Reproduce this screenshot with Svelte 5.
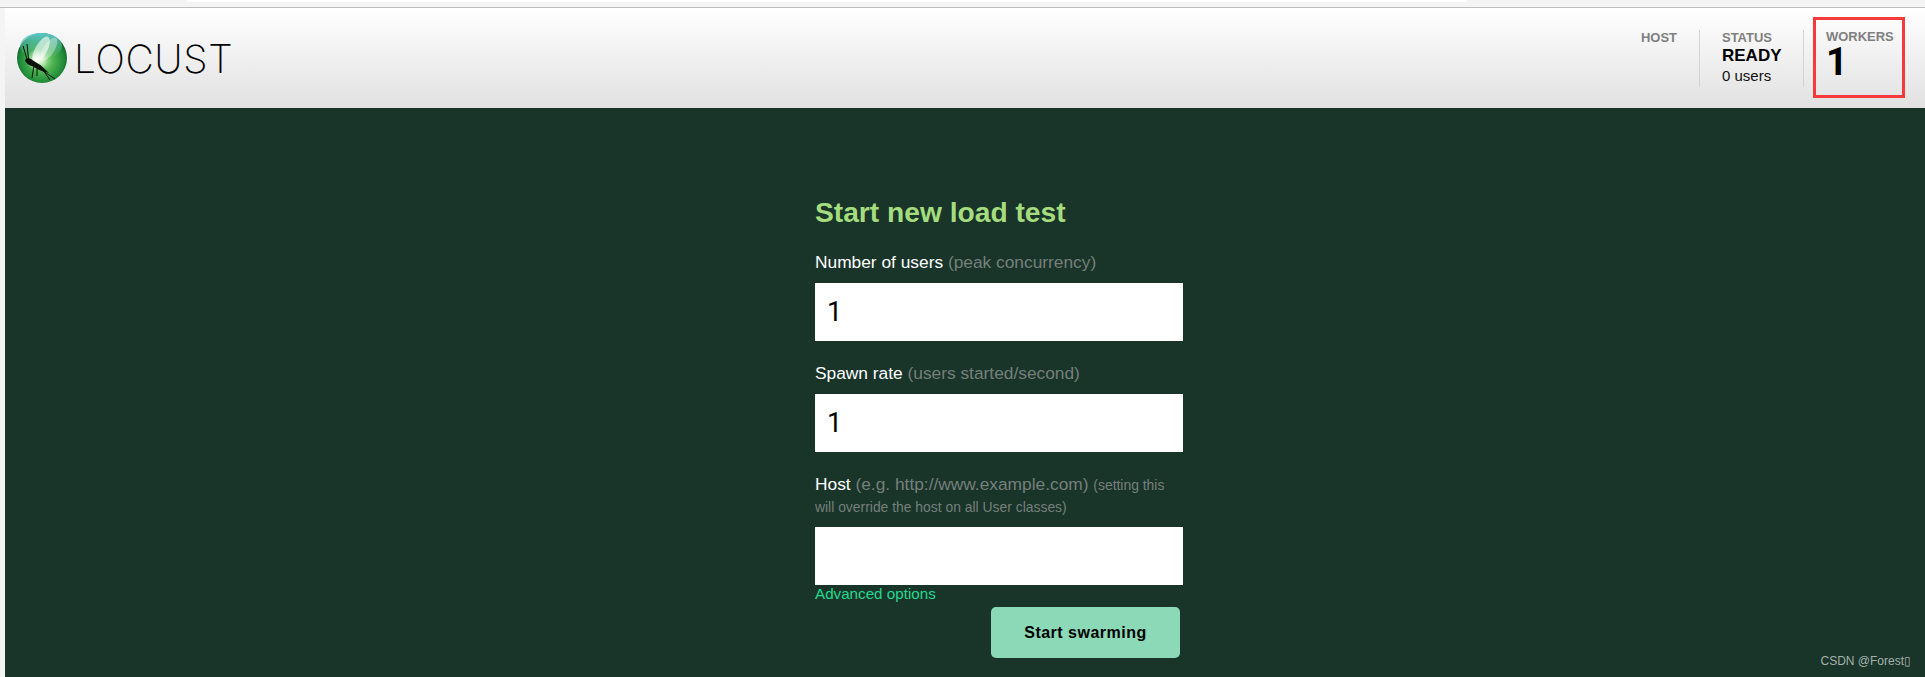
<script>
  let users = $state(1);
  let spawnRate = $state(1);
  let host = $state('');
</script>

<div class="page">
  <div class="topstrip"><div class="tab"></div></div>

  <header>
    <div class="brand">
      <svg class="logo" width="50" height="50" viewBox="0 0 50 50">
        <defs>
          <radialGradient id="ball" cx="0.5" cy="0.55" r="0.55">
            <stop offset="0" stop-color="#b8ecaa" />
            <stop offset="0.4" stop-color="#4fb552" />
            <stop offset="0.8" stop-color="#1f8a38" />
            <stop offset="1" stop-color="#0c5a28" />
          </radialGradient>
          <linearGradient id="cap" x1="0" y1="0" x2="0" y2="1">
            <stop offset="0" stop-color="#5cc8cc" stop-opacity="1" />
            <stop offset="1" stop-color="#6fd0a0" stop-opacity="0" />
          </linearGradient>
          <radialGradient id="glow" cx="0.5" cy="0.5" r="0.5">
            <stop offset="0" stop-color="#fff" stop-opacity="0.95" />
            <stop offset="1" stop-color="#fff" stop-opacity="0" />
          </radialGradient>
        </defs>
        <circle cx="25" cy="25" r="25" fill="url(#ball)" />
        <ellipse cx="24" cy="13" rx="21" ry="13" fill="url(#cap)" />
        <circle cx="20" cy="27" r="11" fill="url(#glow)" />
        <ellipse cx="24" cy="17" rx="6" ry="15" transform="rotate(28 24 17)" fill="#fff" opacity="0.6" />
        <ellipse cx="32" cy="16" rx="5.5" ry="13" transform="rotate(32 32 16)" fill="#fff" opacity="0.35" />
        <path d="M8 27 C10 24.5 13 25 16 27.5 L24 32.5 L32 40 L22 37 L16 33.5 C13 32.5 9 31 8 27 Z" fill="#0a120a" />
        <path d="M10 26 L6 13 M11.5 26 L10 11 M17 32 L15 45 M20 34 L20 43 M23 36 L38 46 M26 37 L33 47" stroke="#0a120a" stroke-width="1" fill="none" />
      </svg>
      <span class="wordmark">LOCUST</span>
    </div>

    <div class="stats">
      <div class="stat host">
        <div class="stat-label">HOST</div>
      </div>
      <div class="stat status">
        <div class="stat-label">STATUS</div>
        <div class="stat-value">READY</div>
        <div class="stat-sub">0 users</div>
      </div>
      <div class="workers">
        <div class="stat-label">WORKERS</div>
        <div class="workers-value">1</div>
      </div>
    </div>
  </header>

  <main>
    <form onsubmit={(e) => e.preventDefault()}>
      <h2>Start new load test</h2>

      <label for="users">Number of users <small>(peak concurrency)</small></label>
      <input id="users" type="text" bind:value={users} />

      <label for="rate" class="rate-label">Spawn rate <small>(users started/second)</small></label>
      <input id="rate" type="text" bind:value={spawnRate} />

      <label for="host" class="host-label">Host <small>(e.g. http://www.example.com)</small> <small class="note">(setting this will override the host on all User classes)</small></label>
      <input id="host" type="text" bind:value={host} />

      <a class="advanced" href="#advanced">Advanced options</a>
      <div class="actions">
        <button type="submit">Start swarming</button>
      </div>
    </form>
    <div class="watermark">CSDN @Forest▯</div>
  </main>
</div>

<style>
  :global(body) {
    margin: 0;
    background: #f4f4f4;
    font-family: "Liberation Sans", Arial, sans-serif;
  }

  .page {
    height: 677px;
    display: flex;
    flex-direction: column;
    overflow: hidden;
  }

  .topstrip {
    height: 7px;
    flex: none;
    border-bottom: 1px solid #bdbdbd;
    background: #f4f4f4;
  }

  .tab {
    width: 1280px;
    height: 2px;
    margin-left: 187px;
    background: #fff;
    border-radius: 0 0 8px 8px;
  }

  header {
    height: 100px;
    flex: none;
    margin-left: 5px;
    display: flex;
    justify-content: space-between;
    background: linear-gradient(#fff, #e1e1e1);
  }

  .brand {
    display: flex;
    align-items: center;
    padding-left: 12px;
    height: 100px;
  }

  .logo {
    flex: none;
  }

  .wordmark {
    margin-left: 7px;
    font-family: Inter, sans-serif;
    font-weight: 200;
    font-size: 39px;
    letter-spacing: 0.6px;
    color: #000;
    line-height: 1;
  }

  .stats {
    display: flex;
    align-items: flex-start;
    padding: 9px 20px 0 0;
  }

  .stat {
    height: 57px;
    margin-top: 13px;
    border-right: 1px solid #d4d4d4;
  }

  .host {
    padding-right: 20px;
  }

  .status {
    width: 81px;
    padding-left: 22px;
    margin-right: 9px;
  }

  .stat-label {
    font-size: 13.5px;
    font-weight: 700;
    line-height: 15px;
    color: #808080;
    transform: scaleX(0.96);
    transform-origin: left;
  }

  .stat-value {
    font-size: 17px;
    font-weight: 700;
    line-height: 21px;
    color: #000;
  }

  .stat-sub {
    font-size: 15px;
    line-height: 19px;
    color: #111;
  }

  .workers {
    width: 76px;
    height: 66px;
    border: 3px solid #f43a3a;
    padding: 9px 0 0 10px;
  }

  .workers-value {
    font-family: Roboto, sans-serif;
    font-size: 38px;
    font-weight: 700;
    line-height: 36px;
    color: #000;
  }

  main {
    position: relative;
    flex: 1;
    margin-left: 5px;
    background: #19352a;
    padding: 0 0 0 810px;
  }

  form {
    width: 368px;
    padding-top: 87px;
  }

  h2 {
    margin: 0 0 23px;
    font-size: 28.2px;
    line-height: 34px;
    font-weight: 700;
    color: #a5dc7e;
  }

  label {
    display: block;
    font-size: 17.33px;
    line-height: 20px;
    margin-bottom: 11px;
    color: #fff;
  }

  small {
    font-size: 17.33px;
    color: #767f7a;
  }

  .note {
    font-size: 13.9px;
  }

  .rate-label {
    margin-top: 22px;
    margin-bottom: 11px;
  }

  .host-label {
    line-height: 21px;
    margin-top: 22px;
    margin-bottom: 9px;
  }

  input {
    display: block;
    width: 100%;
    height: 58px;
    box-sizing: border-box;
    margin: 0;
    padding: 0 12px;
    border: none;
    border-radius: 0;
    background: #fff;
    font-family: Roboto, sans-serif;
    font-size: 27px;
    color: #000;
    outline: none;
  }

  .advanced {
    display: block;
    font-size: 15.2px;
    line-height: 18px;
    color: #22d98f;
    text-decoration: none;
  }

  .actions {
    display: flex;
    justify-content: flex-end;
    padding: 4px 3px 0 0;
  }

  button {
    width: 189px;
    height: 51px;
    border: none;
    border-radius: 5px;
    background: #8bd9b6;
    color: #000;
    font-family: "Liberation Sans", Arial, sans-serif;
    font-size: 16px;
    font-weight: 700;
    letter-spacing: 0.5px;
    cursor: pointer;
  }

  .watermark {
    position: absolute;
    right: 14px;
    bottom: 9px;
    font-size: 12px;
    line-height: 14px;
    color: #a4b0ab;
  }
</style>
